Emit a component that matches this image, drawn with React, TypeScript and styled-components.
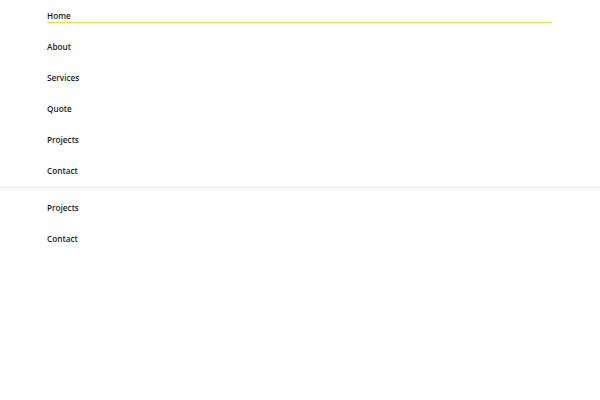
import styled, { createGlobalStyle } from "styled-components";

const GlobalStyle = createGlobalStyle`
  body {
    margin: 0;
    background: #ffffff;
    font-family: "Open Sans", "Liberation Sans", sans-serif;
  }
`;

const Page = styled.div`
  display: flex;
  flex-direction: column;
  gap: 6px;
`;

const Panel = styled.nav`
  background: #ffffff;
  box-shadow: 0 2px 5px rgba(0, 0, 0, 0.07);
  padding: 0 48px 0 47px;
`;

const MenuList = styled.ul`
  list-style: none;
  margin: 0;
  padding: 0;
  display: flex;
  flex-direction: column;
`;

const MenuItem = styled.li`
  height: 31px;
  display: flex;
  flex-direction: column;
`;

const MenuLink = styled.a<{ $active?: boolean }>`
  display: block;
  padding-top: 11px;
  padding-bottom: 1px;
  font-size: 8.2px;
  line-height: 10px;
  font-weight: 600;
  color: #1a1a1a;
  text-decoration: none;
  border-bottom: 1px solid ${(p) => (p.$active ? "#e8dc4c" : "transparent")};
`;

const mainItems = ["Home", "About", "Services", "Quote", "Projects", "Contact"];
const extraItems = ["Projects", "Contact"];

export default function App() {
  return (
    <>
      <GlobalStyle />
      <Page>
        <Panel>
          <MenuList>
            {mainItems.map((item) => (
              <MenuItem key={item}>
                <MenuLink href="#" $active={item === "Home"}>
                  {item}
                </MenuLink>
              </MenuItem>
            ))}
          </MenuList>
        </Panel>
        <Panel>
          <MenuList>
            {extraItems.map((item) => (
              <MenuItem key={item}>
                <MenuLink href="#">{item}</MenuLink>
              </MenuItem>
            ))}
          </MenuList>
        </Panel>
      </Page>
    </>
  );
}
